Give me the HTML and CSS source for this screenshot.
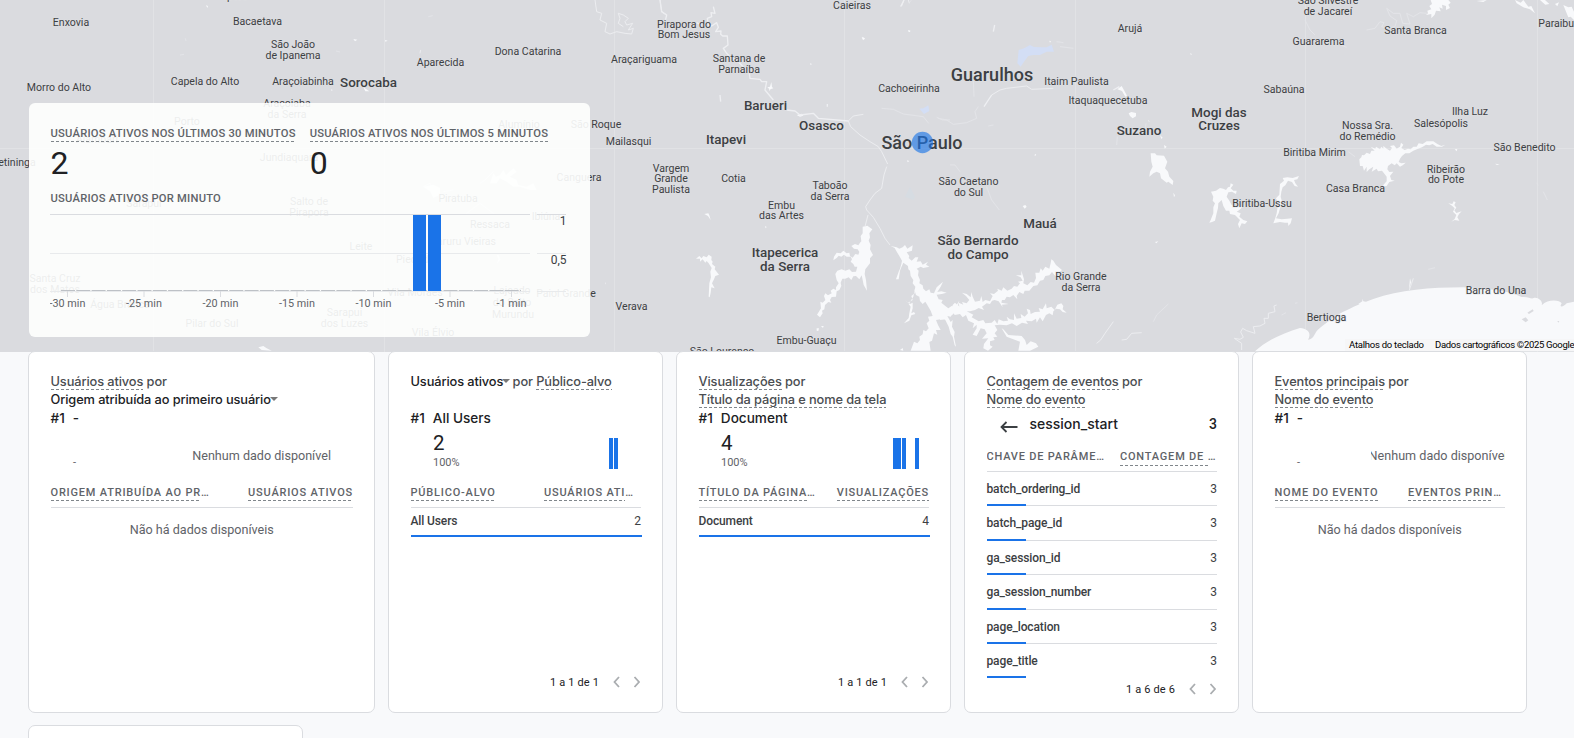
FILE: index.html
```html
<!DOCTYPE html>
<html lang="pt-BR">
<head>
<meta charset="utf-8">
<title>Tempo real</title>
<link rel="stylesheet" href="styles.css">
</head>
<body>
<section class="map">
<svg class="map-canvas" width="1574" height="352" viewBox="0 0 1574 352">
  <rect class="land" width="1574" height="352"/>
  <path class="tile" d="M153.5 0V352M384.5 0V352M614.5 0V352M844.5 0V352M1075.5 0V352M1305.5 0V352M1537.5 0V352M0 148.5H1574"/>
  <g class="water" transform="translate(640 0) scale(.33333)">
    <path d="M668 680L682 677 697 688 688 700 690 712 686 722 692 735 690 748 699 765 690 775 690 790 676 808 674 822 678 840 681 872 671 855 668 840 665 826 658 838 648 828 640 829 634 840 626 832 616 836 607 836 602 848 604 858 598 870 590 874 588 890 575 891 570 900 574 908 565 906 555 915 553 928 546 932 548 940 540 952 531 944 543 925 541 905 548 908 556 900 552 888 556 880 564 886 575 880 572 872 580 866 588 870 588 862 596 850 590 840 586 822 592 812 605 808 616 812 628 808 636 816 648 815 652 800 644 800 640 792 632 785 636 778 632 770 620 770 612 764 604 770 596 767 590 774 580 781 582 770 590 758 602 760 610 752 620 760 628 758 630 768 638 773 646 762 655 764 658 756 653 748 642 746 634 738 645 732 655 736 660 728 664 724 662 708 668 700z"/>
    <path d="M168 776L178 768 185 775 190 768 200 772 206 764 215 770 214 780 218 785 216 792 226 800 224 808 230 815 237 824 226 828 222 838 216 850 224 865 214 862 212 878 209 892 206 890 208 850 213 832 211 815 215 804 206 790 200 783 196 788 188 778 180 785 180 776z"/>
    <path d="M812 1052L822 1025 832 1030 840 1020 838 1010 848 1003 850 990 858 994 866 985 860 970 868 962 864 950 878 948 872 932 862 915 856 905 848 912 840 903 838 890 828 885 824 872 826 860 818 850 820 840 812 828 810 812 805 808 804 798 790 788 784 802 780 812 776 838 768 838 776 815 780 806 784 792 786 782 778 768 772 758 764 744 752 738 770 742 778 746 788 742 795 735 802 746 818 736 816 752 800 757 808 768 806 774 815 782 826 772 835 772 830 785 842 784 848 794 864 785 858 794 868 800 850 804 842 800 830 806 836 812 834 826 840 840 838 850 848 856 850 866 858 874 868 868 872 878 882 880 890 862 909 845 902 860 892 876 904 874 920 878 905 882 890 884 896 898 908 900 904 908 916 918 925 925 935 918 946 920 958 902 954 916 962 924 950 928 958 940 944 936 938 944 930 940 922 948 932 966 938 960 936 980 944 996 942 1010 948 1040 944 1036 938 1010 932 1002 926 980 916 960 906 950 902 958 888 960 894 975 902 990 888 990 892 1004 882 1000 876 1022 868 1026 872 1052z"/>
    <path d="M826 860L824 880 814 888 818 900 804 908 793 900 810 912 818 908 818 925 814 940 822 936 826 942 814 946 808 962 792 970 806 954 808 940 812 920 806 912 820 890zM530 985l7 0-2 8-5-1zM543 978l8 0-2 6zM375 678l5 3-3 4zM193 642l12-2 3 6 4 14-8-12zM666 110l9 5-4 6zM804 91l7 1-4 5z"/>
    <path d="M470 345L485 341 490 347 480 350zM382 262l8-2 4-14 2 15 4 4-9 3-2 6-2-8zM510 190l6 2-4 3z"/>
    <path class="fine" d="M60 0L65 35 80 45 76 62M170 68L185 76M220 20L225 40 213 38 215 50 202 55 205 75 215 78 230 68 235 82 227 95 243 93 242 103 248 108 262 108 264 135 250 145 260 160 270 170 300 190 328 220 330 235 360 238 365 245 380 245 375 270 400 300M440 330L465 333 480 345 520 340 535 355 625 363M562 312L562 320M240 285L242 305"/>
    <path class="river" d="M625 363L640 348 670 343M625 363L632 380 660 405 690 425 715 440 725 455 743 492M740 500L732 525 725 565 705 580 690 600 677 620 680 630 700 652 720 685 735 715 750 735M675 680L684 645M785 18L792 0M805 0L808 10"/>
    <path class="faint" d="M725 325L760 328 790 342 850 350 866 370M890 352L908 360 930 360"/>
  </g>
  <g class="water" transform="translate(860 0) scale(.33333)">
    <path d="M240 960L244 940 262 930 275 930 278 915 285 908 298 920 296 908 310 914 306 906 320 910 328 900 318 888 306 878 320 882 332 892 334 876 338 890 345 905 360 902 364 888 368 906 376 900 390 904 398 888 390 880 402 882 414 872 412 866 425 872 430 862 442 872 455 866 462 858 472 860 480 850 474 845 488 842 482 832 468 826 484 826 484 812 488 825 492 838 490 850 502 856 512 846 522 848 528 834 526 818 538 818 542 805 548 812 556 800 568 806 572 790 574 778 580 782 588 795 606 810 592 822 602 832 586 828 576 816 568 826 556 828 550 840 540 842 532 856 520 858 508 872 494 872 490 882 478 876 470 888 472 898 460 885 450 892 440 890 434 900 426 900 424 908 446 912 426 914 428 922 416 904 404 900 396 902 390 912 380 910 366 920 372 930 356 924 345 930 330 934 320 934 340 944 335 952 356 964 370 960 376 970 395 968 404 960 412 972 416 958 430 964 444 962 440 950 450 958 462 960 462 940 470 956 484 954 482 942 494 950 504 940 500 926 510 930 512 942 525 936 540 935 536 924 548 928 558 910 560 925 574 920 584 930 592 914 604 910 610 918 608 928 620 938 608 936 600 928 588 926 580 934 578 946 568 940 558 945 548 964 540 952 530 968 528 956 515 964 498 962 504 972 486 968 470 978 456 970 440 976 420 974 404 976 412 990 404 1000 412 1010 400 1012 404 1020 390 1024 390 1036 398 1040 384 1052 370 1045 372 1032 385 1015 366 1016 380 1000 374 988 362 985 350 1008 338 1004 350 985 350 974 338 985 342 970 325 962 318 945 308 952 300 942 284 945 280 938 272 950 262 948 258 958z"/>
    <path d="M475 1052L480 1025 440 1010 425 985 430 988 445 1005 485 1008 495 1020 500 1035 512 1024 528 1030 535 1040 510 1052zM120 1050l8-6 2 8z"/>
    <path d="M872 460L885 460 890 466 912 467 922 485 915 505 924 515 928 530 940 543 938 555 925 545 920 548 903 535 900 520 890 515 880 520 868 530 870 515 878 500 874 485zM806 340l8-4 14 3 0 10-10 6-8-7zM900 405l8 8-4 4zM912 435l8 5-6 6zM940 578l5 8-3 6zM785 258l8 14 8 15-5 3-10-17-14-5zM488 618l8-3 4 5-6 6zM885 726l10-2-6 6zM975 720l10 5M5 112l8 3-4 5zM145 91l7 2-5 4zM141 481l7 2-5 4zM525 461l4 4-5 3zM990 160l6 2-3 3zM568 122l5 2-3 4zM864 360l6 5-5-1z"/>
    <path class="fine" d="M372 320L395 285M400 95L404 75M122 20L132 0M760 270L778 260"/>
    <path class="river" d="M395 285L420 270 440 265 500 258 515 268 580 265M785 1020L800 1018 815 1000 845 998M710 1030L722 1020 735 1000 760 965"/>
    <path class="faint" d="M355 320L345 335 350 355 320 368 280 373 260 360 235 355M150 5L155 0M590 125L610 128M600 140L640 145M270 495L285 495 300 515M380 560L395 600 418 630M880 965L890 945 925 912M855 395L858 370M770 435L772 410M385 378L400 375M340 240L342 290"/>
    <path class="blue" d="M476 150L492 145 510 135 522 141 545 142 560 142 575 134 582 155 560 155 540 165 520 165 505 168 492 185 482 200 472 190zM178 326L190 325 205 316 208 333 192 342z"/>
    <path class="park" d="M135 590L150 560 165 590 160 600z"/>
  </g>
  <g class="water" transform="translate(1200 0) scale(.33333)">
    <path d="M165 1054C200 1020 250 1000 300 984C325 986 335 1000 324 1019C343 1018 345 995 353 990C400 950 430 930 520 897C600 870 690 862 790 862C850 865 920 870 965 891C985 891 995 898 1001 894C1015 890 1030 905 1025 916C1045 895 1080 900 1085 910C1075 925 1092 920 1100 910L1122 905V1054z"/>
    <path d="M478 478L484 472 486 465 492 466 500 458 510 462 514 452 524 452 512 440 526 446 528 440 540 448 544 440 550 446 550 438 560 446 570 452 576 444 570 438 582 436 590 446 600 440 603 428 610 434 604 444 614 450 624 446 632 448 640 440 650 440 656 430 668 432 680 424 700 424 712 432 724 438 736 434 726 440 710 440 698 432 688 436 678 434 666 442 654 446 640 452 628 460 616 460 606 468 600 476 596 486 604 490 617 488 608 496 600 500 590 490 584 496 575 490 564 498 562 508 568 516 580 515 570 528 574 540 584 542 568 546 560 558 545 560 560 544 560 530 552 520 546 512 534 514 530 506 515 515 520 500 508 508 500 516 500 500 492 512 488 498 480 498zM764 448l8-1-2 7z"/>
    <path d="M33 575L48 572 60 564 70 566 78 570 84 562 90 560 92 550 100 554 92 565 100 572 110 572 108 582 96 575 85 577 80 590 88 602 95 615 112 620 128 620 118 630 110 635 122 640 118 650 130 660 142 664 135 672 125 670 118 685 114 672 120 660 105 645 90 642 88 632 78 632 70 618 65 600 55 610 54 624 50 640 45 662 36 666 28 668 32 660 40 640 40 622 45 610 38 602 40 590z"/>
    <path d="M240 552L252 542 248 534 262 532 278 534 297 528 292 538 282 540 286 550 294 560 284 558 276 546 264 542 256 556 248 562 244 575 242 590 246 605 240 625 236 640 228 655 245 658 262 656 276 655 272 670 265 678 264 668 255 668 240 666 220 670 226 654 230 640 232 626 235 610 228 595 238 584zM745 610l12 2 4-8 6 3-4 8 6 8-6 8 6 8 16-5-8 8-5 10 6 10-14-2-10 5 10-8 5-12-10-10 5-10-8-8z"/>
    <path d="M678 45L684 40 682 32 694 28 688 18 696 12 692 0 745 0 752 8 745 14 750 24 738 30 738 18 726 14 728 26 718 22 722 34 708 32 704 44 694 55 694 42zM1090 15L1105 22 1115 20 1122 35V60L1112 50 1105 52 1100 40zM830 3L860 0 850 6zM1020 0L1035 0 1048 12 1036 14zM945 0L962 8 970 0 985 20 994 18 1005 40 990 28 970 22 950 10zM1065 12l12-5-5 12zM475 912l12-8 0-8 3 8 10 2-18 10zM630 858l-3 12 3-35 3 12zM885 491l14 2-8 2z"/>
    <path class="river" d="M125 1050L125 1030 103 1015 120 1018 130 1012 122 996 128 985 140 992 165 1000 160 980 180 978 195 970 192 955 205 955 205 940 225 935 222 918 230 915M640 835L635 850 628 870"/>
    <path class="faint" d="M500 90L525 85 540 65 552 68 545 80 562 85 585 80 590 62 570 48 560 25 580 40 600 40 608 70 630 72 620 40 640 50 660 38 680 40M315 60L330 90 345 105M1030 575L1042 600M1010 550L1015 555M410 130L440 142M445 455L465 470M685 808L705 803M245 945L258 938M285 910L292 908"/>
    <path class="land" d="M965 958l12-6 8 9-8 6zM982 938l16-10 3 5-14 9zM1072 963l6 0-3 5z"/>
  </g>
  <g class="water" transform="scale(.33333)">
    <path d="M775 1042L790 1038 800 1045 815 1052 785 1050zM1060 117l12 2-7 5zM1090 262l18 12-12 0zM618 16l6 2-2 6zM993 268l5 2-3 3zM1155 120l8 2-7 3zM1490 765l6 0 5 14-10 12 4-14zM1815 845l3 8-2-1z"/>
    <path class="river" d="M1270 560L1290 550 1300 580 1315 575 1330 600M1330 575L1360 570M1440 550L1455 540 1480 515M1400 640L1440 610 1480 640"/>
    <path d="M1480 520L1488 530 1500 525 1510 510 1518 525 1540 505 1550 515 1530 530 1550 540 1555 555 1580 560 1600 550 1610 570 1590 570 1560 560 1540 560 1520 545 1500 535 1490 550 1470 550zM1270 560l30-6 20 10 0 20-20 10-10-20z"/>
    <path class="river" d="M1785 0L1790 35 1805 40 1800 60 1820 70 1815 95 1830 102 1850 95 1875 100 1895 102 1900 85 1885 90 1898 70 1880 75 1875 65 1885 55 1870 45 1855 40 1860 55 1855 70 1870 80M1980 0L1985 35 2000 45M1260 160L1262 150"/>
    <path class="faint" d="M1285 50L1298 47M1008 153L1020 156M556 115L558 123M540 165L552 163"/>
  </g>
  <g class="labels">
    <text x="71" y="26">Enxovia</text><text x="257.500" y="25">Bacaetava</text><text x="293" y="48.500">São João</text><text x="293" y="59.500">de Ipanema</text>
    <text x="205" y="85">Capela do Alto</text><text x="303" y="85">Araçoiabinha</text><text x="59" y="91.500">Morro do Alto</text>
    <text x="287" y="107.500">Araçoiaba</text><text x="287" y="118.500">da Serra</text><text x="187" y="125">Porto</text><text x="97" y="143">Alambari</text><text x="289" y="161">Jundiaquara</text><text x="8" y="166.500">Itapetininga</text>
    <text x="144" y="207">Sarapuí</text><text x="309" y="205">Salto de</text><text x="309" y="216">Pirapora</text><text x="361" y="250">Leite</text><text x="55" y="282.500">Santa Cruz</text><text x="55" y="293.500">dos Matos</text><text x="120" y="308.500">Água Branca</text><text x="212" y="327.500">Pilar do Sul</text><text x="344.500" y="316">Sarapui</text><text x="344.500" y="327">dos Luzes</text><text x="433" y="336.500">Vila Élvio</text>
    <text x="440.500" y="66.500">Aparecida</text><text x="528" y="55">Dona Catarina</text><text x="644" y="63">Araçariguama</text><text x="519" y="128.500">Alumínio</text><text x="596" y="128.500">São Roque</text><text x="628.500" y="145.500">Mailasqui</text><text x="579" y="181">Canguera</text><text x="458" y="202">Piratuba</text><text x="546" y="220.500">Ibiúna</text><text x="490" y="228.500">Ressaca</text><text x="463" y="245">Caruru Vieiras</text><text x="415" y="263">Piedade</text><text x="415" y="296.500">Vila Moraes</text><text x="512" y="294.500">Lajeado</text><text x="512" y="306">do Salto</text><text x="513" y="318">Murundu</text><text x="566" y="297.500">Paiol Grande</text><text x="631.500" y="310">Verava</text><text x="236" y="0">Iperó</text>
    <text x="684" y="28">Pirapora do</text><text x="684" y="38.500">Bom Jesus</text><text x="739" y="62.500">Santana de</text><text x="739" y="73">Parnaíba</text><text x="852" y="9">Caieiras</text><text x="909" y="92.500">Cachoeirinha</text><text x="671" y="172">Vargem</text><text x="671" y="182.500">Grande</text><text x="671" y="193">Paulista</text><text x="733.500" y="182.500">Cotia</text><text x="830" y="189.500">Taboão</text><text x="830" y="200.500">da Serra</text><text x="781.500" y="209">Embu</text><text x="781.500" y="219.500">das Artes</text><text x="806.500" y="344">Embu-Guaçu</text><text x="722" y="355.500">São Lourenço</text>
    <text x="968.500" y="185.500">São Caetano</text><text x="968.500" y="196">do Sul</text><text x="1130" y="32.500">Arujá</text><text x="1076.500" y="85.500">Itaim Paulista</text><text x="1108" y="104">Itaquaquecetuba</text><text x="1081" y="280">Rio Grande</text><text x="1081" y="291">da Serra</text>
    <text x="1328" y="4.500">São Silvestre</text><text x="1328" y="15.500">de Jacareí</text><text x="1415.500" y="34.500">Santa Branca</text><text x="1318.500" y="45.500">Guararema</text><text x="1562" y="27">Paraibuna</text><text x="1284" y="93.500">Sabaúna</text><text x="1470" y="115">Ilha Luz</text><text x="1441" y="127.500">Salesópolis</text><text x="1367.500" y="129.500">Nossa Sra.</text><text x="1367.500" y="140.500">do Remédio</text><text x="1314.500" y="156.500">Biritiba Mirim</text><text x="1524.500" y="151">São Benedito</text><text x="1446" y="173">Ribeirão</text><text x="1446" y="183.500">do Pote</text><text x="1355.500" y="192.500">Casa Branca</text><text x="1262" y="207">Biritiba-Ussu</text><text x="1496" y="294.500">Barra do Una</text><text x="1326.500" y="321.500">Bertioga</text>
    <g class="town"><text x="368.500" y="87">Sorocaba</text><text x="765.500" y="110.500">Barueri</text><text x="821.500" y="130.500">Osasco</text><text x="726" y="144">Itapevi</text><text x="785" y="257.500">Itapecerica</text><text x="785" y="271">da Serra</text><text x="1040" y="228">Mauá</text><text x="978" y="245.500">São Bernardo</text><text x="978" y="259">do Campo</text><text x="1139" y="135">Suzano</text><text x="1219" y="117">Mogi das</text><text x="1219" y="130.500">Cruzes</text></g>
    <g class="city"><text x="992" y="81">Guarulhos</text><text x="922" y="149">São Paulo</text></g>
  </g>
  <circle class="pin" cx="922.500" cy="142.500" r="10.700"/>
  <rect class="credit-bg" x="1345" y="339" width="229" height="12"/>
  <g class="credit"><text x="1349" y="348" textLength="75">Atalhos do teclado</text><text x="1435" y="348" textLength="139.500">Dados cartográficos ©2025 Google</text></g>
</svg>
<div class="summary">
  <div class="totals">
    <div class="total"><span class="caption dash">USUÁRIOS ATIVOS NOS ÚLTIMOS 30 MINUTOS</span><div class="big">2</div></div>
    <div class="total"><span class="caption dash">USUÁRIOS ATIVOS NOS ÚLTIMOS 5 MINUTOS</span><div class="big">0</div></div>
  </div>
  <div class="caption">USUÁRIOS ATIVOS POR MINUTO</div>
  <svg class="chart" width="530" height="104" viewBox="50 208 530 104">
    <path class="grid top" d="M50 214.500H530M537 214.500H566"/>
    <path class="grid" d="M50 253.500H530M537 253.500H566M50 291.500H530M537 291.500H566"/>
    <path class="ticks" d="M67.500 291V297M144 291V297M220.500 291V297M297 291V297M373.500 291V297M450 291V297M511.500 291V297"/>
    <path class="zero" d="M61 290.500H521" stroke-dasharray="14 1.300"/>
    <path class="bar" d="M413 215h13v76h-13zM428 215h13v76h-13z"/>
    <g class="xlab"><text x="67.500" y="307">-30 min</text><text x="144" y="307">-25 min</text><text x="220.500" y="307">-20 min</text><text x="297" y="307">-15 min</text><text x="373.500" y="307">-10 min</text><text x="450" y="307">-5 min</text><text x="511.500" y="307">-1 min</text></g>
    <g class="ylab"><text x="566.500" y="225">1</text><text x="566.500" y="264">0,5</text></g>
  </svg>
</div>
</section>
<main class="cards">
  <article class="card wide">
    <h2><span class="dash">Usuários ativos</span> por<br><b>Origem atribuída ao primeiro usuário</b><i class="caret"></i></h2>
    <div class="lead"><span>#1</span><span>-</span></div>
    <div class="metric"><div><div class="value"></div><div class="pct">-</div></div><div class="nodata">Nenhum dado disponível</div></div>
    <div class="head"><span><u>ORIGEM ATRIBUÍDA AO PR</u>…</span><span class="end"><u>USUÁRIOS ATIVOS</u></span></div>
    <p class="empty">Não há dados disponíveis</p>
  </article>
  <article class="card">
    <h2><b>Usuários ativos</b><i class="caret tight"></i> por <span class="dash">Público-alvo</span></h2>
    <div class="lead"><span>#1</span><span>All Users</span></div>
    <div class="metric"><div><div class="value">2</div><div class="pct">100%</div></div><svg class="spark" width="60" height="31"><path class="bar" d="M27 0h4v31h-4zM32 0h4v31h-4z"/></svg></div>
    <div class="head"><span><u>PÚBLICO-ALVO</u></span><span><u>USUÁRIOS ATI</u>…</span></div>
    <div class="row full"><b>All Users</b><span>2</span></div>
    <div class="pager">1 a 1 de 1<svg width="28" height="12"><path d="M6 1L1.500 6 6 11M21.500 1L26 6 21.500 11"/></svg></div>
  </article>
  <article class="card">
    <h2><span class="dash">Visualizações</span> por<br><span class="dash">Título da página e nome da tela</span></h2>
    <div class="lead"><span>#1</span><span>Document</span></div>
    <div class="metric"><div><div class="value">4</div><div class="pct">100%</div></div><svg class="spark" width="60" height="31"><path class="bar" d="M23 0h8v31h-8zM32 0h4v31h-4zM45 0h4v31h-4z"/></svg></div>
    <div class="head"><span><u>TÍTULO DA PÁGINA</u>…</span><span class="end"><u>VISUALIZAÇÕES</u></span></div>
    <div class="row full"><b>Document</b><span>4</span></div>
    <div class="pager">1 a 1 de 1<svg width="28" height="12"><path d="M6 1L1.500 6 6 11M21.500 1L26 6 21.500 11"/></svg></div>
  </article>
  <article class="card detail">
    <h2><span class="dash">Contagem de eventos</span> por<br><span class="dash">Nome do evento</span></h2>
    <div class="back"><svg width="18" height="12"><path d="M17.500 6H1.500M6.500 1L1.500 6 6.500 11"/></svg><span>session_start</span><span class="count">3</span></div>
    <div class="head"><span>CHAVE DE PARÂME…</span><span><u>CONTAGEM DE </u>…</span></div>
    <div class="row"><b>batch_ordering_id</b><span>3</span></div>
    <div class="row"><b>batch_page_id</b><span>3</span></div>
    <div class="row"><b>ga_session_id</b><span>3</span></div>
    <div class="row"><b>ga_session_number</b><span>3</span></div>
    <div class="row"><b>page_location</b><span>3</span></div>
    <div class="row"><b>page_title</b><span>3</span></div>
    <div class="pager">1 a 6 de 6<svg width="28" height="12"><path d="M6 1L1.500 6 6 11M21.500 1L26 6 21.500 11"/></svg></div>
  </article>
  <article class="card">
    <h2><span class="dash">Eventos principais</span> por<br><span class="dash">Nome do evento</span></h2>
    <div class="lead"><span>#1</span><span>-</span></div>
    <div class="metric"><div><div class="value"></div><div class="pct">-</div></div><div class="nodata clip"><span>Nenhum dado disponível</span></div></div>
    <div class="head"><span><u>NOME DO EVENTO</u></span><span><u>EVENTOS PRIN</u>…</span></div>
    <p class="empty">Não há dados disponíveis</p>
  </article>
  <article class="card next"></article>
</main>
</body>
</html>
```
FILE: styles.css
```css
* { box-sizing: border-box; }
body { margin: 0; width: 1574px; height: 738px; overflow: hidden; background: #f8f9fb; font-family: Roboto, sans-serif; color: #3c4043; }
.map { height: 352px; position: relative; overflow: hidden; }
.map-canvas, .chart { display: block; }
.land { fill: #dadbdf; }
.tile { stroke: #e1e2e5; fill: none; }
.water { fill: #f8f9fb; }
.fine, .river, .faint { fill: none; stroke: #eeeff2; stroke-width: 4; stroke-linejoin: round; }
.river { stroke: #ecedf0; stroke-width: 3; }
.faint { stroke: #e3e4e8; stroke-width: 3; }
.blue { fill: #d3def5; }
.park { fill: #d6dce2; }
.labels { font-size: 10.55px; text-anchor: middle; fill: #3c4043; stroke: #dfe0e3; stroke-width: 1.5px; paint-order: stroke; stroke-opacity: .5; transform: translateY(-.3px); }
.town { font-size: 13.4px; font-weight: 500; }
.city { font-size: 18px; font-weight: 500; }
.pin { fill: #1a73e8; fill-opacity: .63; }
.credit-bg { fill: #f5f5f5; fill-opacity: .7; }
.credit { font-size: 9.5px; fill: #000; }
.summary { position: absolute; left: 29px; top: 103px; width: 561px; height: 234px; border-radius: 6px; background: rgba(254, 255, 254, .91); padding: 22px 0 0 21.5px; }
.totals { display: flex; gap: 14px; }
.caption { font-size: 11.2px; font-weight: 500; line-height: 17px; color: #5f6368; white-space: nowrap; letter-spacing: .23px; }
.totals .caption { display: block; height: 17px; line-height: 18px; }
.total { height: 65px; }
.dash { background: repeating-linear-gradient(90deg, #80868b 0 3px, transparent 3px 5px) left bottom / 100% 1px no-repeat; }
.big { font-size: 32px; line-height: 38px; color: #202124; margin-top: 2px; }
.chart { margin: 1px 0 0 -.5px; }
.grid { stroke: #e8eaec; }
.top { stroke: #dadce0; }
.zero { stroke: #bdc1c6; }
.ticks { stroke: #dadce0; }
.bar { fill: #1a73e8; }
.xlab { font-size: 10.8px; fill: #5f6368; text-anchor: middle; }
.ylab { font-size: 12px; fill: #3c4043; text-anchor: end; }
.cards { display: grid; grid-template-columns: 347px repeat(4, 275px); grid-template-rows: 362px 60px; gap: 12px 13px; padding-left: 28px; height: 387px; overflow: hidden; margin-top: -1px; position: relative; }
.card { background: #fff; border: 1px solid #dadce0; border-radius: 7px; padding: 21px 21px 0 21.5px; display: flex; flex-direction: column; overflow: hidden; min-width: 0; }
.next { width: 275px; }
h2 { margin: 0; height: 36px; font: 500 12.8px/18px Inter, sans-serif; color: #4a4d51; letter-spacing: -.1px; white-space: nowrap; }
h2 b { font-weight: 500; color: #202124; }
h2 .dash { display: inline-block; height: 17px; vertical-align: top; }
.caret { display: inline-block; border: 4.5px solid transparent; border-top-color: #777; border-bottom: 0; margin: 0 0 3px -.5px; }
.tight { margin-right: -1px; margin-left: -1px; }
.lead { display: flex; gap: 8px; height: 18px; font: 500 13.6px/19px Inter, sans-serif; color: #202124; }
.metric { height: 56px; display: flex; justify-content: space-between; padding-left: 22.5px; }
.value { height: 27px; font-size: 20.5px; line-height: 33px; color: #202124; }
.pct { font-size: 11px; line-height: 17px; color: #5f6368; }
.spark { margin: 11px -1px 0 0; }
.nodata { font-size: 12.6px; line-height: 58px; color: #5f6368; padding-right: 22px; white-space: nowrap; }
.clip { width: 134px; overflow: hidden; padding: 0; display: flex; justify-content: center; }
.head { display: grid; grid-template-columns: 133.5px 1fr; height: 25px; flex: none; border-bottom: 1px solid #dadce0; font-size: 11px; font-weight: 500; letter-spacing: .8px; line-height: 20px; color: #5f6368; white-space: nowrap; }
.wide .head { grid-template-columns: 170px 1fr; }
.head u { display: inline-block; height: 18px; vertical-align: top; text-decoration: none; white-space: pre; background: repeating-linear-gradient(90deg, #80868b 0 3px, transparent 3px 5px) left bottom / 100% 1px no-repeat; }
.end { text-align: right; }
.empty { margin: 13px 0 0; text-align: center; font-size: 12.6px; line-height: 18px; color: #5f6368; }
.row { display: flex; justify-content: space-between; height: 34.4px; flex: none; font-size: 12px; line-height: 34px; position: relative; box-shadow: inset 0 -1px #dadce0; }
.row::after { content: ""; position: absolute; left: 0; bottom: 0; width: 39px; height: 2px; background: #1a73e8; }
.row b { font-weight: 500; letter-spacing: -.12px; }
.full { height: 29px; line-height: 26px; box-shadow: none; }
.full::after { width: calc(100% + 1px); }
.row:has(+ .pager) { box-shadow: none; }
.pager { margin-top: auto; margin-bottom: 20px; display: flex; justify-content: flex-end; align-items: center; gap: 14px; height: 20px; font-size: 11px; color: #202124; letter-spacing: .15px; }
.pager svg { fill: none; stroke: #aaadb0; stroke-width: 1.8; }
.back { display: flex; height: 28px; font: 500 14px/28px Inter, sans-serif; color: #202124; padding: 2px 0 0 13px; gap: 12px; align-items: center; }
.back svg { fill: none; stroke: #3c4043; stroke-width: 1.8; margin-top: 6px; }
.count { margin-left: auto; font-family: Roboto, sans-serif; }
.detail .head { height: 35px; line-height: 39px; }
.detail .head span { height: 29px; overflow: hidden; }
.detail .head u { height: 29px; }
.detail .pager { margin-bottom: 13px; margin-top: 1px; }
```
